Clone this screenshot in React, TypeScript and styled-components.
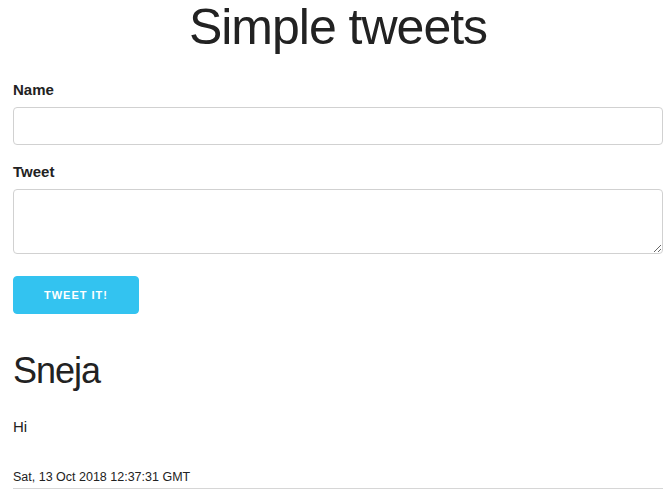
import React, { useState } from 'react'
import styled, { createGlobalStyle } from 'styled-components'

const GlobalStyle = createGlobalStyle`
  html, body {
    margin: 0;
    padding: 0;
    background: #fff;
  }
  body {
    font-family: "Liberation Sans", Arial, Helvetica, sans-serif;
    font-size: 15px;
    line-height: 1.6;
    color: #222;
  }
  * {
    box-sizing: border-box;
  }
`

const Page = styled.div`
  padding: 0 9px 0 13px;
`

const Title = styled.h1`
  margin: 0 0 23px;
  font-size: 50px;
  font-weight: 300;
  line-height: 55px;
  letter-spacing: -1px;
  text-align: center;
`

const Form = styled.form`
  margin: 0;
`

const Label = styled.label`
  display: block;
  margin-bottom: 5px;
  font-weight: 700;
  line-height: 24px;
`

const Field = styled.input`
  display: block;
  width: 100%;
  height: 38px;
  margin: 0 0 15px;
  padding: 6px 10px;
  font: inherit;
  background: #fff;
  border: 1px solid #d1d1d1;
  border-radius: 4px;
  box-shadow: none;
  outline: none;
`

const Area = styled.textarea`
  display: block;
  width: 100%;
  height: 65px;
  min-height: 65px;
  margin: 0 0 22px;
  padding: 6px 10px;
  font: inherit;
  background: #fff;
  border: 1px solid #d1d1d1;
  border-radius: 4px;
  outline: none;
`

const Button = styled.button`
  display: inline-block;
  height: 38px;
  padding: 0 30px;
  font-family: inherit;
  font-size: 11px;
  font-weight: 700;
  line-height: 36px;
  letter-spacing: 1px;
  text-transform: uppercase;
  color: #fff;
  background: #33c3f0;
  border: 1px solid #33c3f0;
  border-radius: 4px;
  cursor: pointer;
`

const Tweet = styled.article`
  margin-top: 34px;
`

const Author = styled.h3`
  margin: 0 0 22px;
  font-size: 36px;
  font-weight: 300;
  line-height: 45px;
  letter-spacing: -1px;
`

const Body = styled.p`
  margin: 0 0 28px;
  line-height: 24px;
`

const Stamp = styled.small`
  display: block;
  font-size: 12.5px;
  line-height: 20px;
`

const Rule = styled.hr`
  margin: 1px 0 0;
  border: 0;
  border-top: 1px solid #d6d6d6;
`

const tweets = [{ name: 'Sneja', content: 'Hi', created: 'Sat, 13 Oct 2018 12:37:31 GMT' }]

export default function App() {
  const [name, setName] = useState('')
  const [content, setContent] = useState('')

  return (
    <Page>
      <GlobalStyle />
      <Title>Simple tweets</Title>
      <Form onSubmit={e => e.preventDefault()}>
        <Label htmlFor="name">Name</Label>
        <Field id="name" type="text" value={name} onChange={e => setName(e.target.value)} />
        <Label htmlFor="content">Tweet</Label>
        <Area id="content" value={content} onChange={e => setContent(e.target.value)} />
        <Button type="submit">Tweet it!</Button>
      </Form>
      {tweets.map(t => (
        <Tweet key={t.created}>
          <Author>{t.name}</Author>
          <Body>{t.content}</Body>
          <Stamp>{t.created}</Stamp>
          <Rule />
        </Tweet>
      ))}
    </Page>
  )
}
